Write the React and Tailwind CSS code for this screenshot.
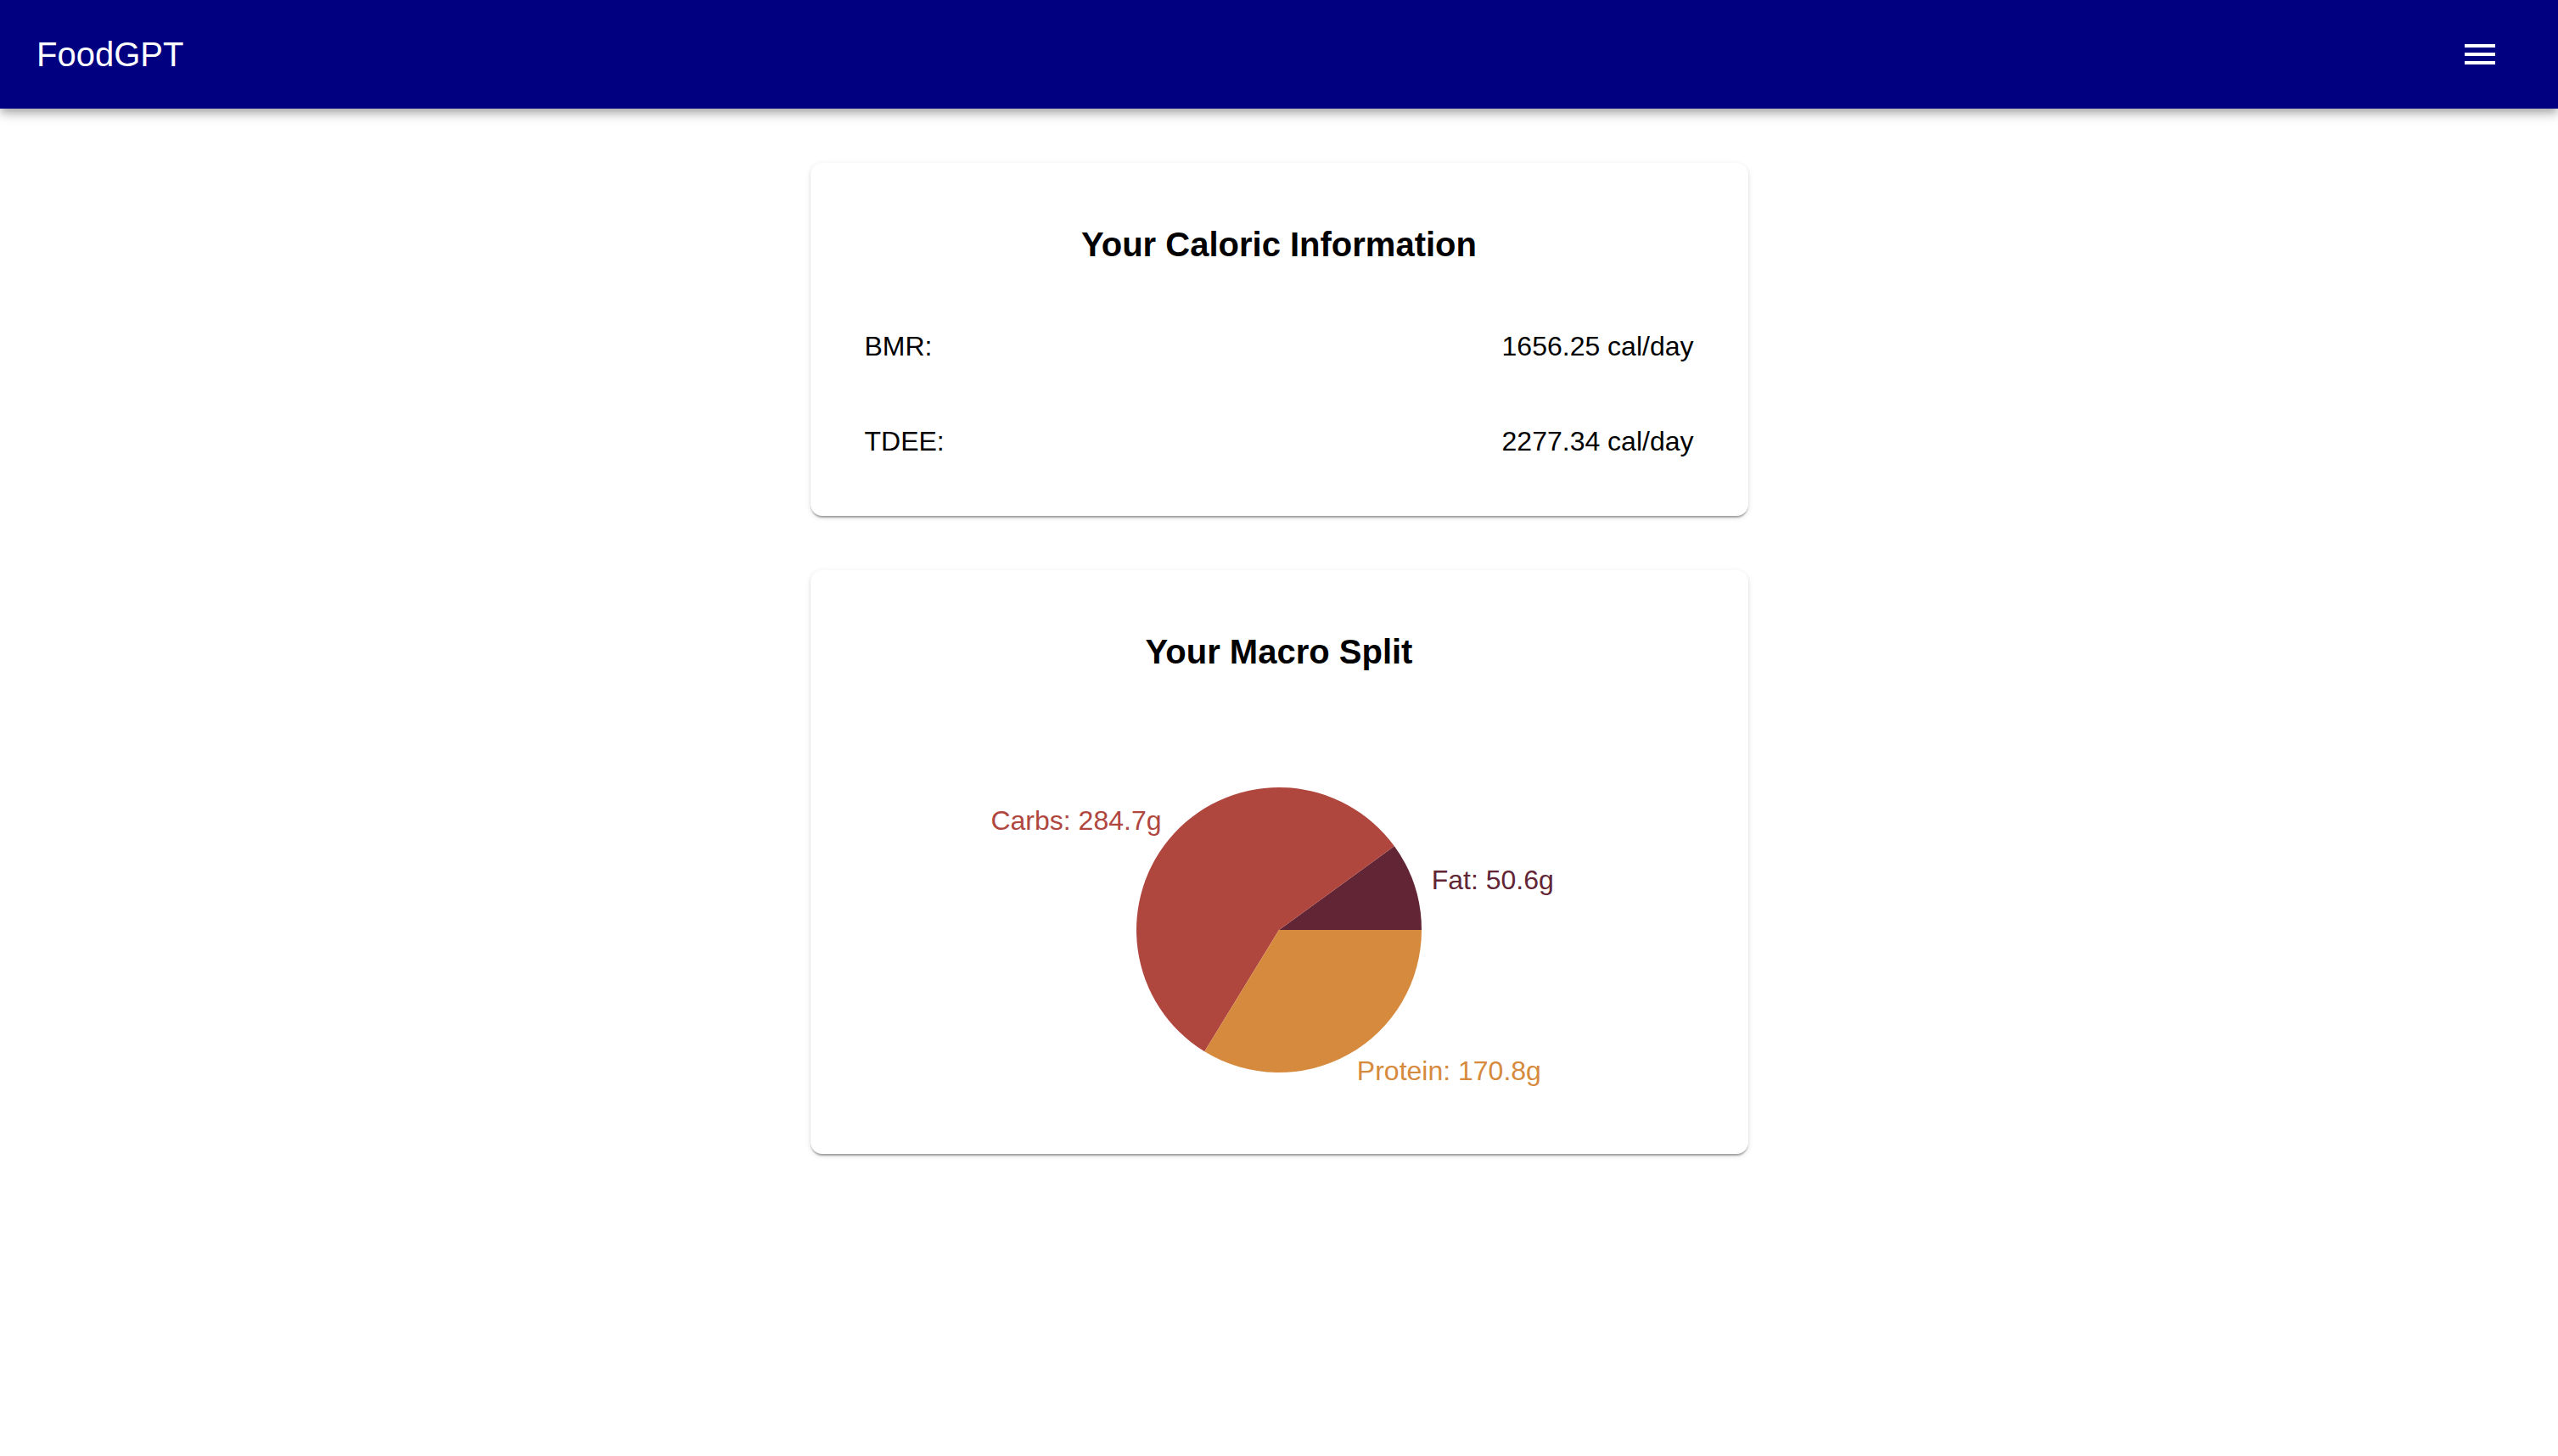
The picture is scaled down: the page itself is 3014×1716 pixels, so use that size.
import React from "react";

const macros = [
  { name: "Fat", grams: 50.6, color: "#622535" },
  { name: "Carbs", grams: 284.7, color: "#b0473f" },
  { name: "Protein", grams: 170.8, color: "#d68a3d" },
];

const MacroPie = () => {
  const cx = 488;
  const cy = 296;
  const r = 168;
  const labelR = 190;
  const total = macros.reduce((s, m) => s + m.grams, 0);
  let start = 0;

  const point = (deg, rad) => {
    const a = (deg * Math.PI) / 180;
    return [cx + rad * Math.cos(a), cy - rad * Math.sin(a)];
  };

  return (
    <svg width="977" height="528" viewBox="0 0 977 528" className="block">
      {macros.map((m) => {
        const sweep = (m.grams / total) * 360;
        const end = start + sweep;
        const [x1, y1] = point(start, r);
        const [x2, y2] = point(end, r);
        const mid = start + sweep / 2;
        const [lx, ly] = point(mid, labelR);
        const large = sweep > 180 ? 1 : 0;
        start = end;
        return (
          <g key={m.name}>
            <path
              d={`M${cx},${cy} L${x1},${y1} A${r},${r} 0 ${large} 0 ${x2},${y2} Z`}
              fill={m.color}
            />
            <text
              x={lx > cx ? lx - 1 : lx + 1}
              y={ly}
              fill={m.color}
              fontSize="32"
              fontFamily="'Liberation Sans', Arial, sans-serif"
              textAnchor={lx > cx ? "start" : "end"}
              dominantBaseline="central"
            >
              {m.name}: {m.grams}g
            </text>
          </g>
        );
      })}
    </svg>
  );
};

const Card = ({ title, children }) => (
  <div className="w-[1105px] mx-auto bg-white rounded-[14px] px-16 pt-16 pb-8 shadow-[0_4px_2px_-2px_rgba(0,0,0,0.2),0_2px_2px_0_rgba(0,0,0,0.14),0_2px_6px_0_rgba(0,0,0,0.12)]">
    <h2 className="text-[40px] leading-[64px] font-bold text-center text-black">{title}</h2>
    {children}
  </div>
);

export default function App() {
  return (
    <div className="min-h-screen bg-white font-['Liberation_Sans',Arial,sans-serif]">
      <header className="h-32 bg-[#000080] flex items-center justify-between pl-[43px] pr-[68px] shadow-[0_4px_8px_-2px_rgba(0,0,0,0.2),0_8px_10px_0_rgba(0,0,0,0.14),0_2px_20px_0_rgba(0,0,0,0.12)] relative z-10">
        <span className="text-white text-[40px]">FoodGPT</span>
        <svg width="48" height="48" viewBox="0 0 24 24" fill="white">
          <path d="M3 18h18v-2H3zm0-5h18v-2H3zm0-7v2h18V6z" />
        </svg>
      </header>

      <main className="flex flex-col gap-16 pt-16 pb-16">
        <Card title="Your Caloric Information">
          <div className="mt-8">
            <div className="flex justify-between items-center py-8 text-[32px] leading-[48px] text-black">
              <span>BMR:</span>
              <span>1656.25 cal/day</span>
            </div>
            <div className="flex justify-between items-center py-8 text-[32px] leading-[48px] text-black">
              <span>TDEE:</span>
              <span>2277.34 cal/day</span>
            </div>
          </div>
        </Card>

        <Card title="Your Macro Split">
          <MacroPie />
        </Card>
      </main>
    </div>
  );
}
